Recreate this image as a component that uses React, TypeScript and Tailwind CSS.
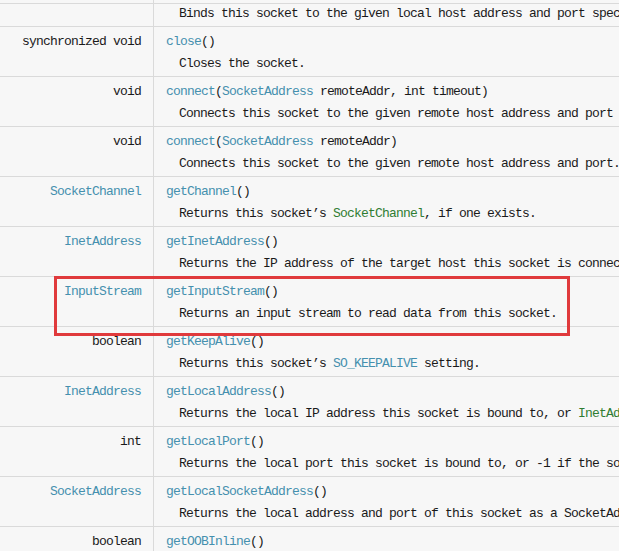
import React from "react";

type Seg = { t: string; c?: "link" | "green" };
type Row = { type: Seg; name: string; args?: Seg[]; desc: Seg[] };

const L = (t: string): Seg => ({ t, c: "link" });
const G = (t: string): Seg => ({ t, c: "green" });
const T = (t: string): Seg => ({ t });

const rows: Row[] = [
  { type: T("synchronized void"), name: "close", desc: [T("Closes the socket.")] },
  {
    type: T("void"),
    name: "connect",
    args: [L("SocketAddress"), T(" remoteAddr, int timeout")],
    desc: [T("Connects this socket to the given remote host address and port with a timeout.")],
  },
  {
    type: T("void"),
    name: "connect",
    args: [L("SocketAddress"), T(" remoteAddr")],
    desc: [T("Connects this socket to the given remote host address and port.")],
  },
  {
    type: L("SocketChannel"),
    name: "getChannel",
    desc: [T("Returns this socket\u2019s "), G("SocketChannel"), T(", if one exists.")],
  },
  {
    type: L("InetAddress"),
    name: "getInetAddress",
    desc: [T("Returns the IP address of the target host this socket is connected to.")],
  },
  {
    type: L("InputStream"),
    name: "getInputStream",
    desc: [T("Returns an input stream to read data from this socket.")],
  },
  {
    type: T("boolean"),
    name: "getKeepAlive",
    desc: [T("Returns this socket\u2019s "), L("SO_KEEPALIVE"), T(" setting.")],
  },
  {
    type: L("InetAddress"),
    name: "getLocalAddress",
    desc: [T("Returns the local IP address this socket is bound to, or "), G("InetAddress"), T(".")],
  },
  {
    type: T("int"),
    name: "getLocalPort",
    desc: [T("Returns the local port this socket is bound to, or -1 if the socket is not bound.")],
  },
  {
    type: L("SocketAddress"),
    name: "getLocalSocketAddress",
    desc: [T("Returns the local address and port of this socket as a SocketAddress.")],
  },
  {
    type: T("boolean"),
    name: "getOOBInline",
    desc: [T("Returns the setting for SO_OOBINLINE.")],
  },
];

function Segs({ segs }: { segs: Seg[] }) {
  return (
    <>
      {segs.map((s, i) =>
        s.c === "link" ? (
          <span key={i} className="text-[#4590ae]">
            {s.t}
          </span>
        ) : s.c === "green" ? (
          <span key={i} className="text-[#2f7d32]">
            {s.t}
          </span>
        ) : (
          <span key={i}>{s.t}</span>
        )
      )}
    </>
  );
}

export default function App() {
  return (
    <div
      className="relative w-[619px] h-[551px] overflow-hidden bg-[#f7f7f7] text-[#1a1a1a] text-[13px] tracking-[-0.8px] whitespace-nowrap"
      style={{ fontFamily: '"Liberation Mono", "DejaVu Sans Mono", monospace' }}
    >
      {/* partial top row */}
      <div className="flex h-[3px]">
        <div className="w-[154px] shrink-0 border-r border-[#dadada]" />
        <div className="flex-1" />
      </div>
      <div className="flex h-[23px] border-t border-[#dadada]">
        <div className="w-[154px] shrink-0 border-r border-[#dadada]" />
        <div className="flex-1 pt-[1px] pl-[25px] leading-[18px]">
          Binds this socket to the given local host address and port specified by the SocketAddress.
        </div>
      </div>
      {rows.map((r, i) => (
        <div key={i} className="flex h-[50px] border-t border-[#dadada]">
          <div className="w-[154px] shrink-0 border-r border-[#dadada] pt-[4px] pr-[12px] text-right leading-[22px]">
            <Segs segs={[r.type]} />
          </div>
          <div className="flex-1 pt-[4px] pl-[12px] leading-[22px]">
            <div>
              <span className="text-[#4590ae]">{r.name}</span>(
              {r.args ? <Segs segs={r.args} /> : null})
            </div>
            <div className="pl-[13px]">
              <Segs segs={r.desc} />
            </div>
          </div>
        </div>
      ))}
      {/* highlight box */}
      <div className="absolute left-[54px] top-[276px] w-[516px] h-[60px] border-[3px] border-[#e03a3c]" />
    </div>
  );
}
